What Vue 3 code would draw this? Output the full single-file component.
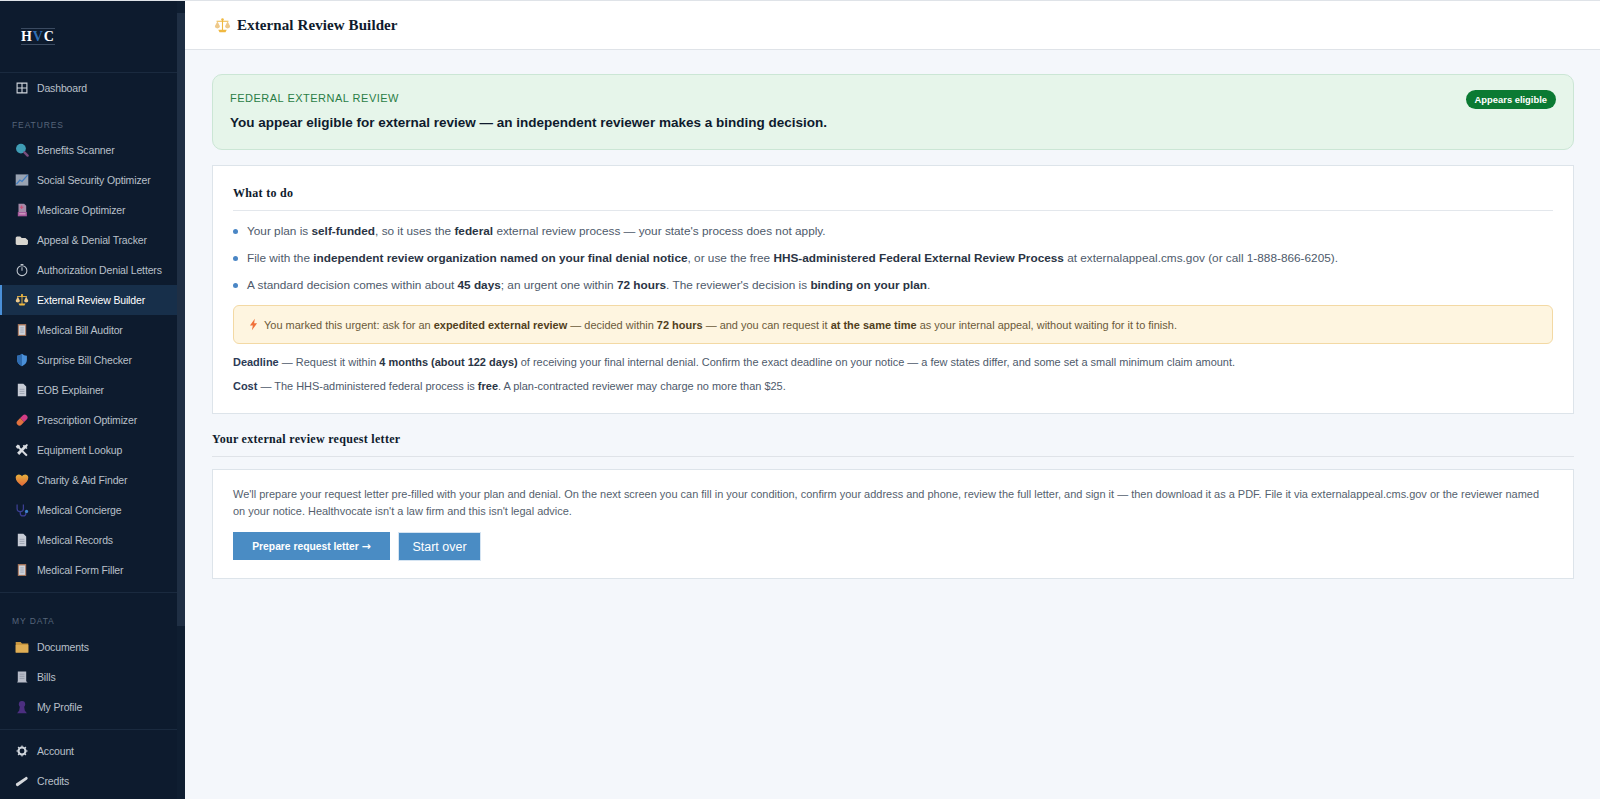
<script setup>
// Petites icônes dessinées à la main (viewBox 0 0 20 20)
const icons = {
  grid: '<path d="M3 3h14v14H3zM10 3v14M3 10h14" fill="none" stroke="#cfd5dc" stroke-width="1.6"/>',
  search: '<circle cx="8.500" cy="8" r="7" fill="#3f9db5"/><path d="M13.500 13.500l4.500 4.500" stroke="#7a4d7c" stroke-width="3.400" stroke-linecap="round"/>',
  chart: '<path d="M1 2h18v16H1z" fill="#98a2b1"/><path d="M2 16l5-6 3 2 8-9" fill="none" stroke="#3f7cc0" stroke-width="1.800"/>',
  medicare: '<path d="M5 1h8l3 3v10H5z" fill="#a58aa8"/><path d="M4 13h13v6H4z" fill="#a85a9c"/><path d="M6 15.500h9" stroke="#e6c3d8" stroke-width="1.200"/><path d="M9.500 3.500v5M7 6h5" stroke="#cf4d74" stroke-width="1.500"/>',
  folderPlain: '<path d="M1 7.500C1 6 2 5 3 5h4.500L9.500 7H15l3.500 3.500V15c0 1-.8 2-2 2H3c-1.200 0-2-1-2-2z" fill="#d8d6d0"/>',
  timer: '<circle cx="10" cy="11" r="7" fill="none" stroke="#c2c8d0" stroke-width="1.500"/><path d="M10 11V6M8 2h4" stroke="#c2c8d0" stroke-width="1.500"/>',
  scales: '<path d="M10 3v13M3 5h14" stroke="#f0b840" stroke-width="1.300"/><path d="M5 15h10l-1.500 3h-7z" fill="#f0b840"/><path d="M1 11l3-6 3 6a3 2.500 0 0 1-6 0zM13 11l3-6 3 6a3 2.500 0 0 1-6 0z" fill="#eec98a"/><circle cx="10" cy="3" r="1.500" fill="#f0b840"/>',
  clipboard: '<path d="M4 1.500h12v17H4z" fill="#a8765a"/><path d="M5.500 3.500h9v13.500h-9z" fill="#cdd2da"/><path d="M7.500 7h5M7.500 10h5M7.500 13h5" stroke="#8d97a6"/>',
  shield: '<path d="M10 1c2 2 4 2.500 7 3v6c0 4-3 7-7 9-4-2-7-5-7-9V4c3-.5 5-1 7-3z" fill="#4a90d9"/><path d="M10 1v18c-4-2-7-5-7-9V4c3-.5 5-1 7-3z" fill="#2f6cb0"/>',
  page: '<path d="M4 1h8l4 4v14H4z" fill="#c7ccd6"/><path d="M6.500 9h7M6.500 12h7M6.500 15h7" stroke="#8f98a8"/>',
  pill: '<path d="M11 3.500a4 4 0 0 1 5.700 5.700L13 13 7.300 7.300z" fill="#d23d85"/><path d="M7.300 7.300L13 13l-3.700 3.700a4 4 0 0 1-5.700-5.700z" fill="#e0723f"/>',
  tools: '<path d="M4 2l3 2v2l9 9 2 2-2 2-2-2-9-9H3L1 5z" fill="#d9dde2"/><path d="M17 1.500l1.500 1.500-2 3 1.500 1-2 1.500-1-1-9 9.500-3-3L12 5l-1-1 2-1.500 1 1z" fill="#d9dde2"/>',
  heart: '<defs><linearGradient id="heart-fill" x1="0" y1="0" x2="0" y2="1"><stop offset="0" stop-color="#e6b03c"/><stop offset="1" stop-color="#e2683a"/></linearGradient></defs><path d="M10 18.500C4 14.500 1 11 1 6.500 1 3.500 3.500 2 5.500 2 7.500 2 9 3 10 4.500 11 3 12.500 2 14.500 2 16.500 2 19 3.500 19 6.500 19 11 16 14.500 10 18.500z" fill="url(#heart-fill)"/>',
  stetho: '<path d="M3 2v6a4.500 4.500 0 0 0 9 0V2M7.500 12.500v2a4 4 0 0 0 8 0v-1" fill="none" stroke="#3c3f94" stroke-width="1.800"/><circle cx="16.500" cy="12" r="2.300" fill="#3f84cc"/>',
  folder: '<path d="M1 3h7l2 2h9v13H1z" fill="#c9973f"/><path d="M1 7h18v11H1z" fill="#dfae55"/>',
  receipt: '<path d="M4 2h12v14l2 2H3l1-2z" fill="#b7bcc8"/><path d="M6.500 6h7M6.500 9h7M6.500 12h7" stroke="#8a91a0"/>',
  person: '<circle cx="10" cy="6" r="4.500" fill="#4c2f80"/><path d="M7 9h6l1 6 3 4H3l3-4z" fill="#4c2f80"/>',
  gear: '<circle cx="10" cy="10" r="5" fill="none" stroke="#cfd5dc" stroke-width="3"/><path d="M10 2v3M10 15v3M2 10h3M15 10h3M4.300 4.300l2 2M13.700 13.700l2 2M4.300 15.700l2-2M13.700 6.300l2-2" stroke="#cfd5dc" stroke-width="1.600"/>',
  ticket: '<path d="M1.500 13.500L15 4.500c1-.7 2-.5 2.700.5s.5 2-.5 2.700L4.500 17c-1 .6-2 .4-2.700-.6s-.5-2.200-.3-2.900z" fill="#d5d8dc"/>',
  bolt: '<path d="M12 1L4.500 11.500H9L7.500 19l8-11H11z" fill="#f0703a"/>'
}

// Navigation latérale
const features = [
  { label: 'Benefits Scanner', icon: 'search' },
  { label: 'Social Security Optimizer', icon: 'chart' },
  { label: 'Medicare Optimizer', icon: 'medicare' },
  { label: 'Appeal & Denial Tracker', icon: 'folderPlain' },
  { label: 'Authorization Denial Letters', icon: 'timer' },
  { label: 'External Review Builder', icon: 'scales', active: true },
  { label: 'Medical Bill Auditor', icon: 'clipboard' },
  { label: 'Surprise Bill Checker', icon: 'shield' },
  { label: 'EOB Explainer', icon: 'page' },
  { label: 'Prescription Optimizer', icon: 'pill' },
  { label: 'Equipment Lookup', icon: 'tools' },
  { label: 'Charity & Aid Finder', icon: 'heart' },
  { label: 'Medical Concierge', icon: 'stetho' },
  { label: 'Medical Records', icon: 'page' },
  { label: 'Medical Form Filler', icon: 'clipboard' }
]
const myData = [
  { label: 'Documents', icon: 'folder' },
  { label: 'Bills', icon: 'receipt' },
  { label: 'My Profile', icon: 'person' }
]
const account = [
  { label: 'Account', icon: 'gear' },
  { label: 'Credits', icon: 'ticket' }
]
</script>

<template>
  <div class="shell">
    <aside class="sidebar">
      <nav class="nav">
        <div class="logo-wrap">
          <div class="logo">H<span>V</span>C</div>
        </div>

        <a class="nav-item">
          <svg class="nav-icon" viewBox="0 0 20 20" v-html="icons.grid"></svg>
          <span>Dashboard</span>
        </a>

        <div class="nav-label features-label">FEATURES</div>
        <a v-for="item in features" :key="item.label" class="nav-item" :class="{ active: item.active }">
          <svg class="nav-icon" viewBox="0 0 20 20" v-html="icons[item.icon]"></svg>
          <span>{{ item.label }}</span>
        </a>

        <hr class="nav-sep" />

        <div class="nav-label data-label">MY DATA</div>
        <a v-for="item in myData" :key="item.label" class="nav-item">
          <svg class="nav-icon" viewBox="0 0 20 20" v-html="icons[item.icon]"></svg>
          <span>{{ item.label }}</span>
        </a>

        <hr class="nav-sep sep-account" />

        <a v-for="item in account" :key="item.label" class="nav-item">
          <svg class="nav-icon" viewBox="0 0 20 20" v-html="icons[item.icon]"></svg>
          <span>{{ item.label }}</span>
        </a>
      </nav>

      <!-- Ascenseur de la barre latérale -->
      <div class="rail"><div class="rail-thumb"></div></div>
    </aside>

    <div class="page">
      <header class="topbar">
        <svg class="title-icon" viewBox="0 0 20 20" v-html="icons.scales"></svg>
        <h1>External Review Builder</h1>
      </header>

      <main class="content">
        <section class="banner">
          <div>
            <div class="banner-kicker">FEDERAL EXTERNAL REVIEW</div>
            <div class="banner-title">You appear eligible for external review — an independent reviewer makes a binding decision.</div>
          </div>
          <span class="badge">Appears eligible</span>
        </section>

        <section class="card todo">
          <h2 class="card-title">What to do</h2>
          <ul class="steps">
            <li>Your plan is <b>self-funded</b>, so it uses the <b>federal</b> external review process — your state's process does not apply.</li>
            <li>File with the <b>independent review organization named on your final denial notice</b>, or use the free <b>HHS-administered Federal External Review Process</b> at externalappeal.cms.gov (or call 1-888-866-6205).</li>
            <li>A standard decision comes within about <b>45 days</b>; an urgent one within <b>72 hours</b>. The reviewer's decision is <b>binding on your plan</b>.</li>
          </ul>
          <div class="alert">
            <svg class="alert-icon" viewBox="0 0 20 20" v-html="icons.bolt"></svg>
            <span>You marked this urgent: ask for an <b>expedited external review</b> — decided within <b>72 hours</b> — and you can request it <b>at the same time</b> as your internal appeal, without waiting for it to finish.</span>
          </div>
          <p class="note"><b class="lead">Deadline</b> — Request it within <b>4 months (about 122 days)</b> of receiving your final internal denial. Confirm the exact deadline on your notice — a few states differ, and some set a small minimum claim amount.</p>
          <p class="note"><b class="lead">Cost</b> — The HHS-administered federal process is <b>free</b>. A plan-contracted reviewer may charge no more than $25.</p>
        </section>

        <h2 class="section-title">Your external review request letter</h2>

        <section class="card letter">
          <p class="letter-text">We'll prepare your request letter pre-filled with your plan and denial. On the next screen you can fill in your condition, confirm your address and phone, review the full letter, and sign it — then download it as a PDF. File it via externalappeal.cms.gov or the reviewer named on your notice. Healthvocate isn't a law firm and this isn't legal advice.</p>
          <div class="actions">
            <button class="btn btn-primary">Prepare request letter <span class="arrow">→</span></button>
            <button class="btn btn-secondary">Start over</button>
          </div>
        </section>
      </main>
    </div>
  </div>
</template>

<style scoped>
.shell {
  display: flex;
  height: 799px;
  overflow: hidden;
  border-top: 1px solid #dfe3e8;
  box-sizing: border-box;
  font-family: "Liberation Sans", Arial, sans-serif;
  background: #f4f7fb;
}

/* Barre latérale */
.sidebar {
  flex: 0 0 185px;
  display: flex;
  height: 100%;
  overflow: hidden;
  background: #0d1b2e;
}

.nav {
  flex: 0 0 177px;
  min-width: 0;
}

.rail {
  flex: 0 0 8px;
  background: #0f1e31;
  padding-top: 12px;
  box-sizing: border-box;
}

.rail-thumb {
  height: 613px;
  background: #1f2f44;
}

.logo-wrap {
  height: 72px;
  padding: 26px 0 0 21px;
  box-sizing: border-box;
  border-bottom: 1px solid #1a2a3f;
}

.logo {
  display: inline-block;
  font-family: "Liberation Serif", serif;
  font-weight: 700;
  font-size: 14px;
  letter-spacing: 0.9px;
  line-height: 15px;
  color: #fff;
  border-top: 1px solid #3a4a60;
  border-bottom: 1px solid #3a4a60;
}

.logo span {
  color: #2f6fb5;
}

.nav-item {
  display: flex;
  align-items: center;
  height: 30px;
  padding-left: 15px;
  gap: 8px;
  font-size: 10.500px;
  letter-spacing: -0.15px;
  color: #b9c0ca;
  box-sizing: border-box;
  white-space: nowrap;
}

.nav-item.active {
  color: #fff;
  background: #172f4a;
  border-left: 2px solid #4a90d9;
  padding-left: 13px;
}

.nav-icon {
  width: 14px;
  height: 14px;
  flex: none;
}

.nav-label {
  font-size: 8.500px;
  letter-spacing: 0.9px;
  color: #56657a;
  padding-left: 12px;
  line-height: 10px;
}

.features-label {
  margin: 17px 0 5px;
}

.data-label {
  margin: 23px 0 6px;
}

.nav-sep {
  border: 0;
  border-top: 1px solid #1a2a3f;
  margin: 7px 0 0;
}

.sep-account {
  margin: 7px 0 6px;
}

/* Zone principale */
.page {
  flex: 1;
  min-width: 0;
  display: flex;
  flex-direction: column;
}

.topbar {
  height: 49px;
  flex: none;
  box-sizing: border-box;
  display: flex;
  align-items: center;
  gap: 6px;
  padding-left: 29px;
  background: #fff;
  border-bottom: 1px solid #dfe3e8;
}

.title-icon {
  width: 17px;
  height: 17px;
}

.topbar h1 {
  margin: 0;
  font-family: "Liberation Serif", serif;
  font-size: 15px;
  font-weight: 700;
  letter-spacing: 0.1px;
  color: #0f1b2d;
}

.content {
  flex: 1;
  padding: 24px 26px 24px 27px;
  display: flex;
  flex-direction: column;
}

.banner {
  height: 76px;
  box-sizing: border-box;
  display: flex;
  justify-content: space-between;
  align-items: flex-start;
  padding: 16px 17px;
  background: #e6f5ea;
  border: 1px solid #cbe6d5;
  border-radius: 10px;
}

.banner-kicker {
  font-size: 11px;
  letter-spacing: 0.5px;
  color: #2a7d46;
  line-height: 15px;
  margin-bottom: 8px;
}

.banner-title {
  font-size: 13.500px;
  font-weight: 700;
  color: #0f1b2d;
  line-height: 17px;
}

.badge {
  background: #0b7a33;
  color: #fff;
  font-size: 9.400px;
  font-weight: 700;
  line-height: 19px;
  padding: 0 9px;
  margin-top: -1px;
  border-radius: 10px;
}

.card {
  background: #fff;
  border: 1px solid #dde4ea;
  box-sizing: border-box;
}

.todo {
  margin-top: 15px;
  height: 249px;
  padding: 20px 20px 0;
}

.card-title {
  margin: 0;
  padding-bottom: 10px;
  font-family: "Liberation Serif", serif;
  font-size: 12px;
  font-weight: 700;
  letter-spacing: 0.3px;
  line-height: 14px;
  color: #0f1b2d;
  border-bottom: 1px solid #e3e7ec;
}

.steps {
  list-style: none;
  margin: 7px 0 0;
  padding: 0;
}

.steps li {
  position: relative;
  padding-left: 14px;
  height: 27px;
  line-height: 27px;
  font-size: 11.800px;
  color: #4e5a6b;
  white-space: nowrap;
}

.steps li::before {
  content: "";
  position: absolute;
  left: 0;
  top: 11px;
  width: 5px;
  height: 5px;
  border-radius: 50%;
  background: #4a86c5;
}

b {
  font-weight: 700;
  color: #2a3444;
}

.alert {
  margin-top: 6px;
  height: 39px;
  box-sizing: border-box;
  display: flex;
  align-items: center;
  gap: 4px;
  padding-left: 13px;
  background: #fef5e0;
  border: 1px solid #f3d9a4;
  border-radius: 6px;
  font-size: 10.970px;
  color: #6b5a3a;
  white-space: nowrap;
}

.alert b {
  color: #51401c;
}

.alert-icon {
  width: 13px;
  height: 13px;
  flex: none;
}

.note {
  margin: 0;
  height: 24px;
  line-height: 24px;
  font-size: 10.970px;
  color: #4e5a6b;
  white-space: nowrap;
}

.alert + .note {
  margin-top: 6px;
}

.note .lead {
  color: #2c3a55;
}

.section-title {
  margin: 18px 0 0;
  padding-bottom: 9px;
  font-family: "Liberation Serif", serif;
  font-size: 12px;
  font-weight: 700;
  letter-spacing: 0.3px;
  line-height: 15px;
  color: #0f1b2d;
  border-bottom: 1px solid #dfe3e8;
}

.letter {
  margin-top: 12px;
  height: 110px;
  padding: 16px 20px 0;
}

.letter-text {
  margin: 0;
  font-size: 10.970px;
  line-height: 17px;
  color: #555f6e;
}

.actions {
  display: flex;
  align-items: flex-start;
  gap: 8px;
  margin-top: 12px;
}

.btn {
  border: 0;
  background: #4a8cc4;
  color: #fff;
  font-family: inherit;
  padding: 0;
}

.btn-primary {
  width: 157px;
  height: 28px;
  font-size: 10.300px;
  font-weight: 700;
}

.arrow {
  font-family: "DejaVu Sans", sans-serif;
  font-size: 11px;
}

.btn-secondary {
  width: 83px;
  height: 29px;
  font-size: 12.500px;
  border: 1px solid #d5e4f2;
}
</style>

<style>
body {
  margin: 0;
  overflow: hidden;
}
</style>
